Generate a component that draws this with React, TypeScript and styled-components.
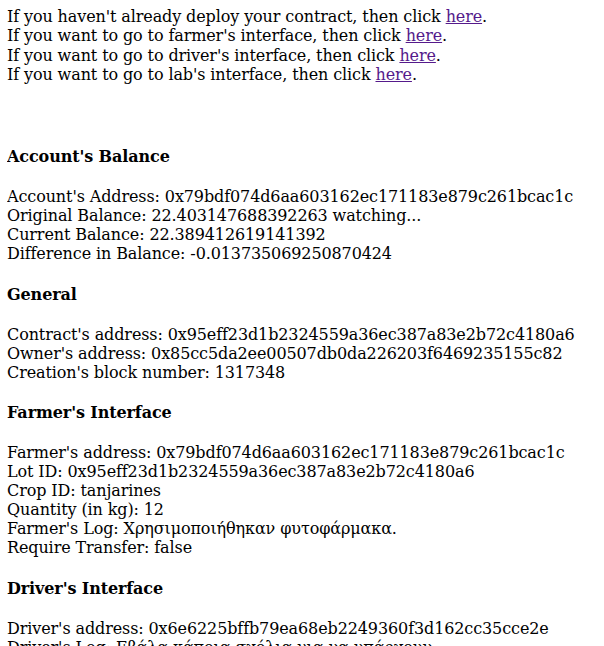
import React from "react";
import styled, { createGlobalStyle } from "styled-components";

const Global = createGlobalStyle`
  html, body {
    background: #ffffff;
  }
  body {
    margin: 7px 8px 8px 7px;
    font-family: "DejaVu Serif", serif;
    font-size: 16px;
    letter-spacing: -0.11px;
    color: #000000;
  }
`;

const Page = styled.div`
  display: block;
`;

const Intro = styled.div`
  margin-bottom: 62.7px;
`;

const Line = styled.div<{ $lh?: string }>`
  line-height: ${(p) => p.$lh ?? "19px"};
  white-space: nowrap;
`;

const Link = styled.a`
  color: #551a8b;
  text-decoration: underline;
  cursor: pointer;
`;

const Heading = styled.h4`
  font-size: 16px;
  font-weight: bold;
  line-height: 19px;
  margin: 21.28px 0;
`;

const Section = styled.section`
  display: block;
`;

const Lines = styled.div`
  display: flex;
  flex-direction: column;
`;

type Sec = { title: string; rows: string[] };

const sections: Sec[] = [
  {
    title: "Account's Balance",
    rows: [
      "Account's Address: 0x79bdf074d6aa603162ec171183e879c261bcac1c",
      "Original Balance: 22.403147688392263 watching...",
      "Current Balance: 22.389412619141392",
      "Difference in Balance: -0.013735069250870424",
    ],
  },
  {
    title: "General",
    rows: [
      "Contract's address: 0x95eff23d1b2324559a36ec387a83e2b72c4180a6",
      "Owner's address: 0x85cc5da2ee00507db0da226203f6469235155c82",
      "Creation's block number: 1317348",
    ],
  },
  {
    title: "Farmer's Interface",
    rows: [
      "Farmer's address: 0x79bdf074d6aa603162ec171183e879c261bcac1c",
      "Lot ID: 0x95eff23d1b2324559a36ec387a83e2b72c4180a6",
      "Crop ID: tanjarines",
      "Quantity (in kg): 12",
      "Farmer's Log: Χρησιμοποιήθηκαν φυτοφάρμακα.",
      "Require Transfer: false",
    ],
  },
  {
    title: "Driver's Interface",
    rows: [
      "Driver's address: 0x6e6225bffb79ea68eb2249360f3d162cc35cce2e",
      "Driver's Log: Εβάλα κάποια σχόλια για να υπάρχουν",
    ],
  },
];

const intro = [
  "If you haven't already deploy your contract, then click ",
  "If you want to go to farmer's interface, then click ",
  "If you want to go to driver's interface, then click ",
  "If you want to go to lab's interface, then click ",
];

export default function App() {
  return (
    <Page>
      <Global />
      <Intro>
        {intro.map((t) => (
          <Line key={t} $lh="19.33px">
            {t}
            <Link href="#">here</Link>.
          </Line>
        ))}
      </Intro>
      {sections.map((s) => (
        <Section key={s.title}>
          <Heading>{s.title}</Heading>
          <Lines>
            {s.rows.map((r) => (
              <Line key={r}>{r}</Line>
            ))}
          </Lines>
        </Section>
      ))}
    </Page>
  );
}
